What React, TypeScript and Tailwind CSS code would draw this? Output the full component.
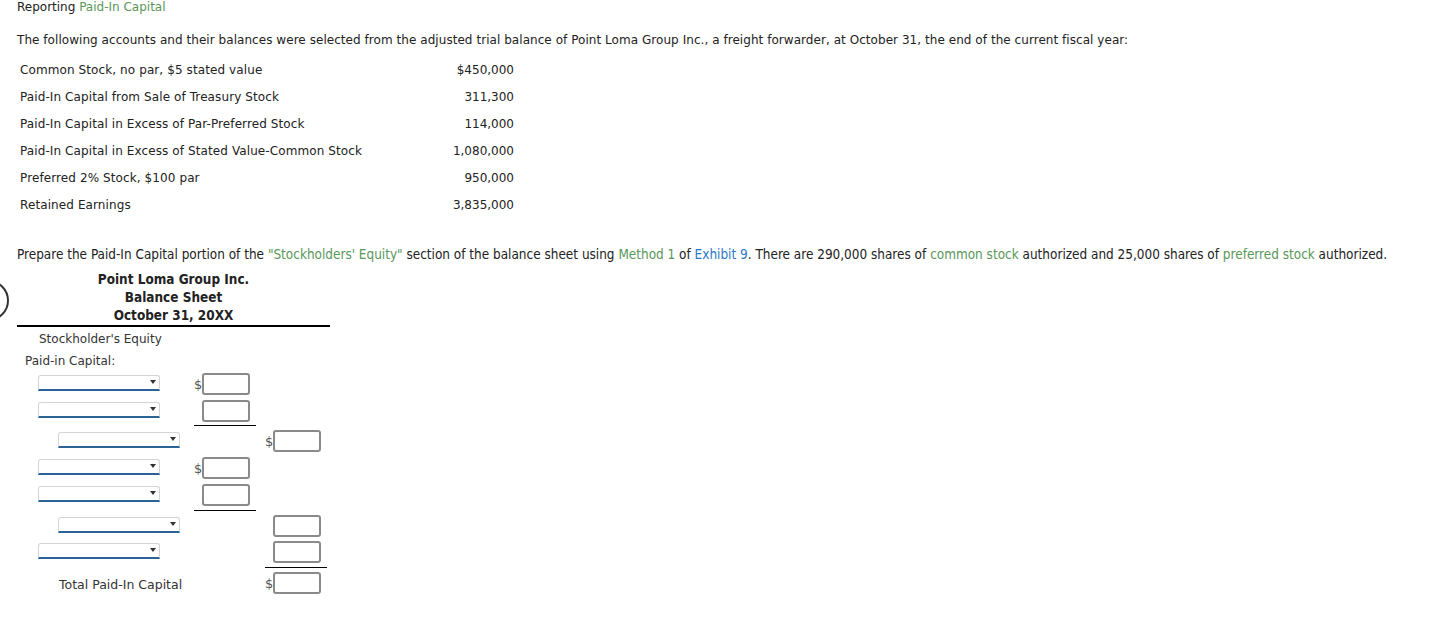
import React from "react";

const V = { fontFamily: '"DejaVu Sans", Verdana, sans-serif' };
const T = { fontFamily: '"DejaVu Sans Condensed", "DejaVu Sans", Tahoma, sans-serif' };

const accounts: [string, string][] = [
  ["Common Stock, no par, $5 stated value", "$450,000"],
  ["Paid-In Capital from Sale of Treasury Stock", "311,300"],
  ["Paid-In Capital in Excess of Par-Preferred Stock", "114,000"],
  ["Paid-In Capital in Excess of Stated Value-Common Stock", "1,080,000"],
  ["Preferred 2% Stock, $100 par", "950,000"],
  ["Retained Earnings", "3,835,000"],
];

function Dropdown({ indent }: { indent?: boolean }) {
  return (
    <div className={indent ? "ml-[58px] mt-[2px]" : "ml-[38px] mt-[2px]"}>
      <div className="relative h-[16px] w-[122px] rounded-t-[3px] border border-b-2 border-[#d4d4d4] border-b-[#2a6496] bg-white">
        <span className="absolute right-[3px] top-[4px] h-0 w-0 border-x-[3px] border-t-[4px] border-x-transparent border-t-[#333]" />
      </div>
    </div>
  );
}

function Cell({ dollar, show }: { dollar?: boolean; show?: boolean }) {
  return (
    <div className="flex h-[22px] w-[62px] items-center">
      <span className="w-[8px] text-[13px] leading-none text-[#555]" style={V}>
        {show && dollar ? "$" : ""}
      </span>
      {show && (
        <div className="h-[22px] w-[48px] rounded-[3px] border-2 border-[#8a8a8a] bg-white" />
      )}
    </div>
  );
}

function Row({
  dd,
  indent,
  c1,
  c2,
  d1,
  d2,
  mt,
  label,
}: {
  dd?: boolean;
  indent?: boolean;
  c1?: boolean;
  c2?: boolean;
  d1?: boolean;
  d2?: boolean;
  mt: string;
  label?: string;
}) {
  return (
    <div className={`flex h-[22px] items-start ${mt}`}>
      <div className="w-[194px]">
        {dd && <Dropdown indent={indent} />}
        {label && (
          <div className="ml-[59px] pt-[5px] text-[12.5px] leading-[15px] text-[#333]" style={V}>
            {label}
          </div>
        )}
      </div>
      <Cell show={c1} dollar={d1} />
      <div className="w-[9px]" />
      <Cell show={c2} dollar={d2} />
    </div>
  );
}

function Line({ col, mt }: { col: 1 | 2; mt: string }) {
  return (
    <div className={`flex ${mt}`}>
      <div className={col === 1 ? "w-[194px]" : "w-[265px]"} />
      <div className="h-px w-[62px] bg-black" />
    </div>
  );
}

export default function App() {
  return (
    <div className="relative h-[640px] w-[1440px] overflow-hidden bg-white text-[#222]">
      <div className="absolute left-[-32px] top-[280px] h-[41px] w-[41px] rounded-full border-2 border-[#333]" />
      <div className="pl-[17px] pt-0">
        <div className="text-[12px] leading-[15px]" style={V}>
          Reporting <span className="text-[#5a975a]">Paid-In Capital</span>
        </div>
        <div className="mt-[18px] text-[12px] leading-[15px] tracking-[0.05px]" style={V}>
          The following accounts and their balances were selected from the adjusted trial balance of Point Loma Group Inc., a freight forwarder, at October 31, the end of the current fiscal year:
        </div>
        <div className="mt-[8px] w-[497px] text-[12px]" style={V}>
          {accounts.map(([l, a]) => (
            <div key={l} className="flex h-[27px] items-center justify-between pl-[3px]">
              <span className="tracking-[0.1px]">{l}</span>
              <span>{a}</span>
            </div>
          ))}
        </div>
        <div className="mt-[29px] text-[13.45px] leading-[15px]" style={T}>
          Prepare the Paid-In Capital portion of the <span className="text-[#5a975a]">"Stockholders' Equity"</span> section of the balance sheet using{" "}
          <span className="text-[#5a975a]">Method 1</span> of <span className="text-[#2a78c8]">Exhibit 9</span>. There are 290,000 shares of{" "}
          <span className="text-[#5a975a]">common stock</span> authorized and 25,000 shares of{" "}
          <span className="text-[#5a975a]">preferred stock</span> authorized.
        </div>
        <div className="mt-[9px] w-[313px] border-b-2 border-black text-center text-[13.45px] font-bold leading-[18px] text-[#222]" style={T}>
          <div>Point Loma Group Inc.</div>
          <div>Balance Sheet</div>
          <div>October 31, 20XX</div>
        </div>
      </div>
      <div className="pl-[39px] pt-[5px] text-[12px] leading-[15px] text-[#333]" style={V}>
        Stockholder's Equity
      </div>
      <div className="pl-[25px] pt-[7px] text-[12px] leading-[15px] text-[#333]" style={V}>
        Paid-in Capital:
      </div>
      <div>
        <Row mt="mt-[4px]" dd c1 d1 />
        <Row mt="mt-[5px]" dd c1 />
        <Line col={1} mt="mt-[3px]" />
        <Row mt="mt-[4px]" dd indent c2 d2 />
        <Row mt="mt-[5px]" dd c1 d1 />
        <Row mt="mt-[5px]" dd c1 />
        <Line col={1} mt="mt-[4px]" />
        <Row mt="mt-[4px]" dd indent c2 />
        <Row mt="mt-[4px]" dd c2 />
        <Line col={2} mt="mt-[4px]" />
        <Row mt="mt-[4px]" label="Total Paid-In Capital" c2 d2 />
      </div>
    </div>
  );
}
